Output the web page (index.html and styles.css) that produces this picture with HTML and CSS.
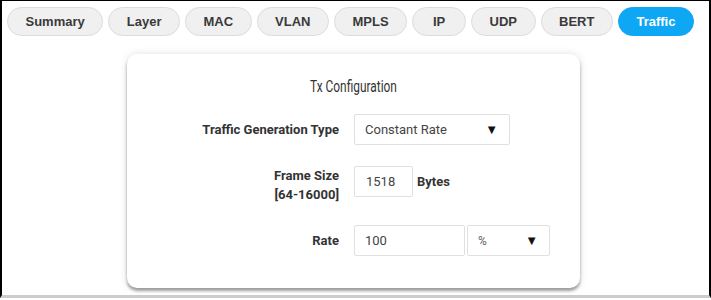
FILE: index.html
```html
<!DOCTYPE html>
<html lang="en">
<head>
  <meta charset="UTF-8">
  <title>Traffic</title>
  <link rel="stylesheet" href="styles.css">
</head>
<body>

  <div class="frame">
    <div class="tabs">
      <button class="tab">Summary</button>
      <button class="tab">Layer</button>
      <button class="tab">MAC</button>
      <button class="tab">VLAN</button>
      <button class="tab">MPLS</button>
      <button class="tab">IP</button>
      <button class="tab">UDP</button>
      <button class="tab">BERT</button>
      <button class="tab active">Traffic</button>
    </div>

    <div class="card">
      <h2>Tx Configuration</h2>
      <div class="form">
        <label>Traffic Generation Type</label>
        <div class="field">
          <div class="select wide">
            <span>Constant Rate</span>
            <span class="arrow">&#9660;</span>
          </div>
        </div>

        <label class="top">Frame Size<br>[64-16000]</label>
        <div class="field top">
          <div class="input short">1518</div>
          <span class="unit">Bytes</span>
        </div>

        <label>Rate</label>
        <div class="field">
          <div class="input medium">100</div>
          <div class="select small">
            <span class="pct">%</span>
            <span class="arrow">&#9660;</span>
          </div>
        </div>
      </div>
    </div>
  </div>

</body>
</html>
```

FILE: styles.css
```css
* { box-sizing: border-box; }
body {
  margin: 0;
  font-family: Roboto, 'Liberation Sans', sans-serif;
  background: #fff;
  color: #333;
}

.frame {
  height: 298px;
  border-top: 1px solid #000;
  border-left: 2px solid #000;
  border-right: 2px solid #000;
  border-bottom: 3px solid #ccc;
  overflow: hidden;
}

.tabs {
  display: flex;
  gap: 5px;
  padding: 6px 5px 0;
}

.tab {
  height: 29px;
  min-width: 54px;
  padding: 0 17.5px;
  border: 1px solid #dcdcdc;
  border-radius: 15px;
  background: #f0f0f0;
  color: #3a3a3a;
  font-family: 'Liberation Sans', Arial, sans-serif;
  font-size: 13px;
  font-weight: bold;
  cursor: pointer;
}

.tab.active {
  background: #0ea7f3;
  border-color: #0ea7f3;
  color: #fff;
}

.card {
  width: 453px;
  margin: 18px 0 0 125px;
  padding: 22px 0 32px;
  background: #fff;
  border-radius: 10px;
  box-shadow: 0 3px 3px rgba(0,0,0,0.35), 0 0 8px rgba(0,0,0,0.12);
}

h2 {
  margin: 0 0 18px;
  font-size: 17px;
  font-weight: normal;
  line-height: 20px;
  text-align: center;
  color: #333;
  transform: scaleX(0.7);
}

.form {
  display: grid;
  grid-template-columns: 212px 1fr;
  column-gap: 15px;
  row-gap: 21px;
  align-items: center;
}

label {
  text-align: right;
  font-size: 13px;
  font-weight: bold;
  line-height: 19px;
  color: #333;
}

label.top, .field.top { align-self: start; }

.field {
  display: flex;
  align-items: center;
  gap: 2px;
}

.input, .select {
  height: 31px;
  border: 1px solid #e0e0e0;
  border-radius: 2px;
  display: flex;
  align-items: center;
  font-size: 13px;
  color: #444;
}

.input { padding-left: 10px; }

.input.short { width: 59px; padding-left: 11px; }
.input.medium { width: 111px; }

.select {
  justify-content: space-between;
  padding: 0 11px 0 10px;
}

.select.wide { width: 156px; }
.select.small { width: 83px; }

.arrow {
  font-size: 13px;
  color: #111;
}

.pct {
  font-size: 12px;
  color: #666;
}

.unit {
  margin-left: 2px;
  font-size: 13px;
  font-weight: bold;
  color: #333;
}
```
